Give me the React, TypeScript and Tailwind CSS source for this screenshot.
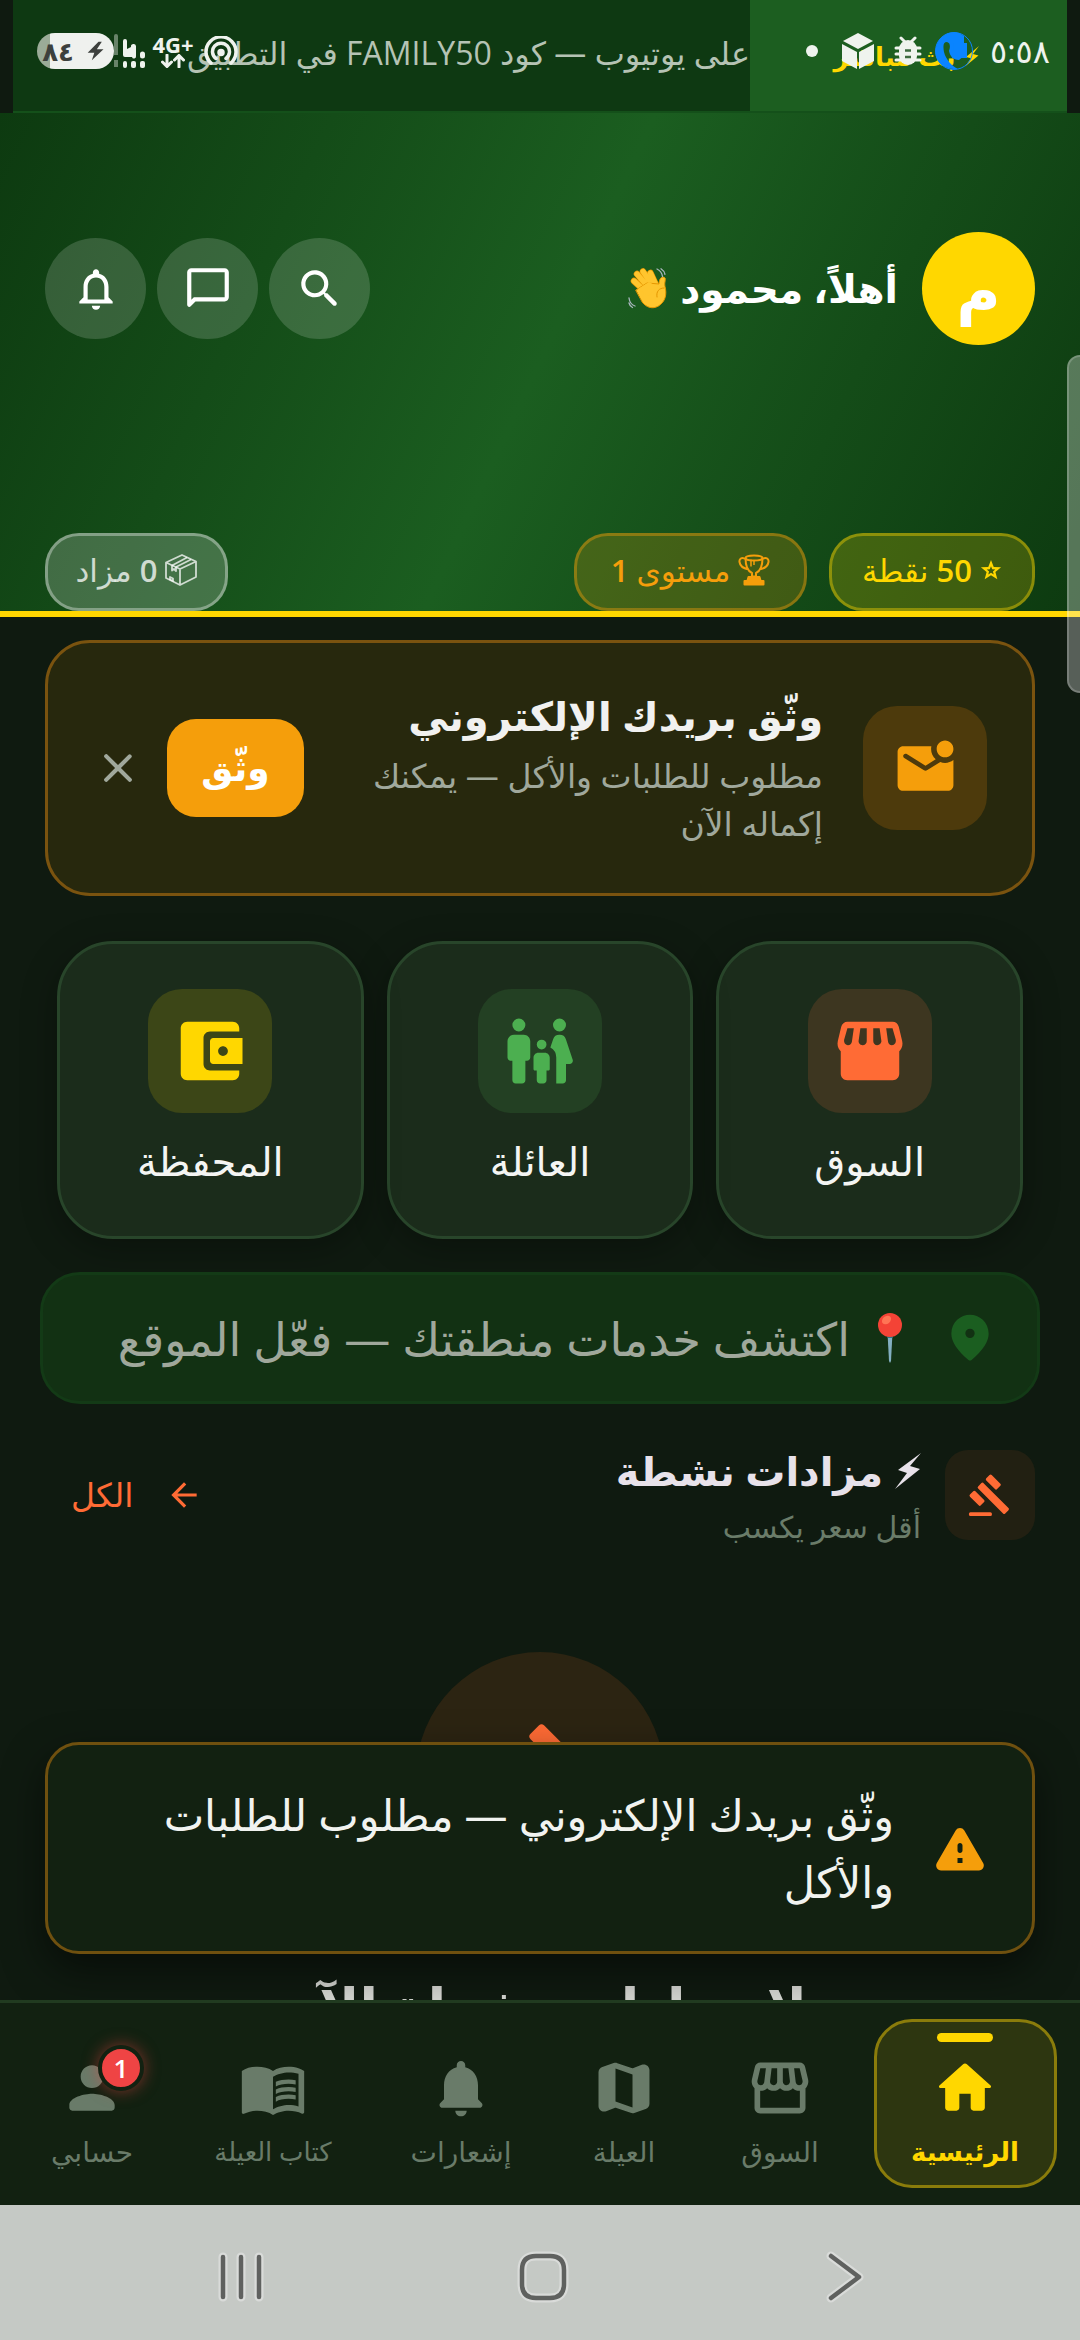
import { ReactNode } from "react";
import { MdArrowBack, MdMenuBook } from "react-icons/md";

type IconProps = { d: string; className?: string };

const Icon = ({ d, className }: IconProps) => (
  <svg viewBox="0 0 24 24" fill="currentColor" aria-hidden="true" className={className}>
    <path fillRule="evenodd" d={d} />
  </svg>
);

const paths = {
  home: "M10 19v-5h4v5c0 .55.45 1 1 1h3c.55 0 1-.45 1-1v-7h1.7c.46 0 .68-.57.33-.87L12.67 3.6c-.38-.34-.96-.34-1.34 0l-8.36 7.53c-.34.3-.13.87.33.87H5v7c0 .55.45 1 1 1h3c.55 0 1-.45 1-1z",
  storeOutline:
    "M21.9 8.89l-1.05-4.37c-.22-.9-1-1.52-1.91-1.52H5.05c-.9 0-1.69.63-1.9 1.52L2.1 8.89c-.24 1.02-.02 2.06.62 2.88.08.11.19.19.28.29V19c0 1.1.9 2 2 2h14c1.1 0 2-.9 2-2v-6.94c.09-.09.2-.18.28-.28.64-.82.87-1.87.62-2.89zM13 5h1.96l.54 4.52c.05.39-.07.78-.33 1.07-.22.26-.54.41-.95.41-.67 0-1.22-.59-1.22-1.31V5zM8.49 9.52L9.04 5H11v4.69c0 .72-.55 1.31-1.29 1.31-.34 0-.65-.15-.89-.41-.25-.29-.37-.68-.33-1.07zM4.04 9.36L5.05 5h1.97l-.58 4.86c-.08.65-.6 1.14-1.21 1.14-.49 0-.8-.27-.93-.44-.27-.32-.36-.75-.26-1.2zM5 19v-6.03c.08.01.15.03.23.03.87 0 1.66-.36 2.24-.95.6.6 1.4.95 2.31.95.87 0 1.65-.36 2.23-.93.59.57 1.39.93 2.29.93.84 0 1.64-.35 2.24-.95.58.59 1.37.95 2.24.95.08 0 .15-.02.23-.03V19H5zM16.98 5h1.95l1.01 4.36c.1.45.01.88-.26 1.2-.14.17-.44.44-.93.44-.61 0-1.14-.49-1.21-1.14L16.98 5z",
  store:
    "M21.9 8.89l-1.05-4.37c-.22-.9-1-1.52-1.91-1.52H5.05c-.9 0-1.69.63-1.9 1.52L2.1 8.89c-.24 1.02-.02 2.06.62 2.88.08.11.19.19.28.29V19c0 1.1.9 2 2 2h14c1.1 0 2-.9 2-2v-6.94c.09-.09.2-.18.28-.28.64-.82.87-1.87.62-2.89zM13 5h1.96l.54 3.9c.05.5-.5 1.3-1.28 1.3-.67 0-1.22-.59-1.22-1.31V5zM8.49 8.9L9.04 5H11v3.89c0 .72-.55 1.31-1.29 1.31-.74 0-1.27-.7-1.22-1.3zM4.04 8.56L5.05 5h1.97l-.58 4.06c-.08.65-.6 1.14-1.21 1.14-.9 0-1.29-.84-1.19-1.64zM16.98 5h1.95l1.01 3.56c.1.85-.29 1.64-1.19 1.64-.61 0-1.14-.49-1.21-1.14L16.98 5z",
  map: "M14.65 4.98l-5-1.75c-.42-.15-.88-.15-1.3-.01L4.36 4.56C3.55 4.84 3 5.6 3 6.46v11.85c0 1.41 1.41 2.37 2.72 1.86l2.93-1.14c.22-.09.47-.09.69-.01l5 1.75c.42.15.88.15 1.3.01l3.99-1.34c.81-.27 1.36-1.04 1.36-1.9V5.69c0-1.41-1.41-2.37-2.72-1.86l-2.93 1.14c-.22.08-.46.09-.69.01zM15 18.89l-6-2.11V5.11l6 2.11v11.67z",
  bell: "M12 22c1.1 0 2-.9 2-2h-4c0 1.1.89 2 2 2zm6-6v-5c0-3.07-1.64-5.64-4.5-6.32V4c0-.83-.67-1.5-1.5-1.5s-1.5.67-1.5 1.5v.68C7.63 5.36 6 7.92 6 11v5l-1.29 1.29c-.63.63-.19 1.71.7 1.71h13.17c.89 0 1.34-1.08.71-1.71L18 16z",
  bellOutline:
    "M12 22c1.1 0 2-.9 2-2h-4c0 1.1.9 2 2 2zm6-6v-5c0-3.07-1.63-5.64-4.5-6.32V4c0-.83-.67-1.5-1.5-1.5s-1.5.67-1.5 1.5v.68C7.64 5.36 6 7.92 6 11v5l-2 2v1h16v-1l-2-2zm-2 1H8v-6c0-2.48 1.51-4.5 4-4.5s4 2.02 4 4.5v6z",
  chat: "M20 2H4c-1.1 0-2 .9-2 2v15.6c0 .9 1.08 1.34 1.7.7L6 18h14c1.1 0 2-.9 2-2V4c0-1.1-.9-2-2-2zm0 14H5.2L4 17.2V4h16v12z",
  search:
    "M15.5 14h-.79l-.28-.27c1.2-1.4 1.82-3.31 1.48-5.34-.47-2.78-2.79-5-5.59-5.34-4.23-.52-7.79 3.04-7.27 7.27.34 2.8 2.56 5.12 5.34 5.59 2.03.34 3.94-.28 5.34-1.48l.27.28v.79l4.25 4.25c.41.41 1.08.41 1.49 0 .41-.41.41-1.08 0-1.49L15.5 14zm-6 0C7.01 14 5 11.99 5 9.5S7.01 5 9.5 5 14 7.01 14 9.5 11.99 14 9.5 14z",
  person:
    "M12 12c2.21 0 4-1.79 4-4s-1.79-4-4-4-4 1.79-4 4 1.79 4 4 4zm0 2c-2.67 0-8 1.34-8 4v1c0 .55.45 1 1 1h14c.55 0 1-.45 1-1v-1c0-2.66-5.33-4-8-4z",
  wallet:
    "M10 16V8c0-1.1.89-2 2-2h9V5c0-1.1-.9-2-2-2H5c-1.11 0-2 .9-2 2v14c0 1.1.89 2 2 2h14c1.1 0 2-.9 2-2v-1h-9c-1.11 0-2-.9-2-2zm3-8c-.55 0-1 .45-1 1v6c0 .55.45 1 1 1h9V8h-9zm3 5.5c-.83 0-1.5-.67-1.5-1.5s.67-1.5 1.5-1.5 1.5.67 1.5 1.5-.67 1.5-1.5 1.5z",
  family:
    "M16 4a2 2 0 1 1 4 0 2 2 0 0 1-4 0zM20 21v-5h1.11c.68 0 1.16-.67.95-1.32l-2.1-6.31A2 2 0 0 0 18.06 7h-.12a2 2 0 0 0-1.9 1.37l-.86 2.58A3.5 3.5 0 0 1 17 14v8h2c.55 0 1-.45 1-1zM12.5 11.5a1.5 1.5 0 1 0 0-3 1.5 1.5 0 0 0 0 3zM5.5 6a2 2 0 1 0 0-4 2 2 0 0 0 0 4zM7.5 21v-6H8c.55 0 1-.45 1-1V9c0-1.1-.9-2-2-2H4c-1.1 0-2 .9-2 2v5c0 .55.45 1 1 1h.5v6c0 .55.45 1 1 1h2c.55 0 1-.45 1-1zM14 21v-3h.5c.28 0 .5-.22.5-.5V14c0-.82-.68-1.5-1.5-1.5h-2c-.82 0-1.5.68-1.5 1.5v3.5c0 .28.22.5.5.5h.5v3c0 .55.45 1 1 1h1c.55 0 1-.45 1-1z",
  mail: "M19 10c1.13 0 2.16-.39 3-1.02V18c0 1.1-.9 2-2 2H4c-1.1 0-2-.9-2-2V6c0-1.1.9-2 2-2h10.1c-.06.32-.1.66-.1 1 0 1.48.65 2.79 1.67 3.71L12 11 5.3 6.81c-.57-.35-1.3.05-1.3.72 0 .29.15.56.4.72l7.07 4.42c.32.2.74.2 1.06 0l4.77-2.98c.54.19 1.1.31 1.7.31zm-3-5c0 1.66 1.34 3 3 3s3-1.34 3-3-1.34-3-3-3-3 1.34-3 3z",
  pin: "M12 2C8 2 4 5.05 4 10.2c0 3.3 2.5 7.2 7.34 11.2.38.33.95.33 1.33 0C17.5 17.4 20 13.5 20 10.2 20 5.05 16 2 12 2zm0 10a2 2 0 1 1 0-4 2 2 0 0 1 0 4z",
  warning:
    "M4.47 21h15.06c1.54 0 2.5-1.67 1.73-3L13.73 4.99c-.77-1.33-2.69-1.33-3.46 0L2.74 18c-.77 1.33.19 3 1.73 3zM12 14c-.55 0-1-.45-1-1v-2c0-.55.45-1 1-1s1 .45 1 1v2c0 .55-.45 1-1 1zm1 4h-2v-2h2v2z",
  bolt: "M19 2L6 13l5 1.2L5 22.5 18.5 11.6 13 10z",
  star: "M12 1l3 7.6 8 .5-6.2 5.1 2.1 7.9L12 17.7 5.1 22.1l2.1-7.9L1 9.1l8-.5zM12 8l-1.3 3.2-3.4.3 2.6 2.2-.9 3.3 3-1.9 3 1.9-.9-3.3 2.6-2.2-3.4-.3z",
  close: "M18.3 5.7a1 1 0 0 0-1.41 0L12 10.59 7.11 5.7A1 1 0 1 0 5.7 7.11L10.59 12 5.7 16.89a1 1 0 1 0 1.41 1.41L12 13.41l4.89 4.89a1 1 0 1 0 1.41-1.41L13.41 12l4.89-4.89a1 1 0 0 0 0-1.41z",
};

const GavelIcon = ({ className }: { className?: string }) => (
  <svg viewBox="0 0 24 24" fill="currentColor" stroke="currentColor" strokeWidth="1.6" strokeLinejoin="round" aria-hidden="true" className={className}>
    <path d="M1.8 21.8h10.4v.4H1.8zM6.375 8.07l1.7-1.7 13 13.015-1.7 1.7zM12.317 2.13l4.53 4.526-1.7 1.7-4.53-4.53zM3.825 10.615l4.53 4.527-1.7 1.7-4.53-4.527z" />
  </svg>
);

const TrophyIcon = ({ className }: { className?: string }) => (
  <svg viewBox="0 0 32 32" fill="none" stroke="currentColor" strokeWidth="2" strokeLinejoin="round" aria-hidden="true" className={className}>
    <ellipse cx="16" cy="4" rx="8.5" ry="2.6" />
    <path d="M7.5 4c0 8 2 13 6.5 15v3.5h4V19c4.5-2 6.500-7 6.500-15M8 5.500C4 2.500 1 4.500 1.500 8c.5 4 4.500 6.500 9 7.500M24 5.500c4-3 7-1 6.500 2.500-.5 4-4.500 6.500-9 7.500" />
    <path d="M10.500 23h11l1 3.500h-13zM6.500 27h19v3.500h-19z" fill="currentColor" />
    <path d="M13 5.500v7M16 6v5" strokeWidth="1.5" />
  </svg>
);

const PackageIcon = ({ className }: { className?: string }) => (
  <svg viewBox="0 0 32 32" fill="none" stroke="currentColor" strokeWidth="1.8" strokeLinejoin="round" aria-hidden="true" className={className}>
    <path d="M1 8.500L17 1l14 6.500V23l-16 8L1 24zM1 8.500L15 15l16-7.500M15 15v16" />
    <path d="M7 11.500L22 3.500M11 13l15-7.500M7 11.500v5l2 -1.500 2 2V13M5 23v2.500l3 1.500v-2.500z" />
  </svg>
);

const WaveEmoji = ({ className }: { className?: string }) => (
  <svg viewBox="0 0 40 42" fill="none" strokeLinecap="round" aria-hidden="true" className={className}>
    <g stroke="#e59600" strokeWidth="6.5">
      <path d="M18 24L6 13M21 20L9 6M25 18L15 3.500M29 19L22.500 5" />
    </g>
    <g stroke="#ffc52e" strokeWidth="5.3">
      <path d="M18 24L6 13M21 20L9 6M25 18L15 3.500M29 19L22.500 5" />
    </g>
    <path d="M8 22l11-7 12 1c0-5 2.500-8 5.500-6.500 2 1-.5 5 .5 9 2 8 .5 15-6.500 19.500-6 3.500-12 1.500-16-3.500z" fill="#ffc52e" stroke="#e59600" strokeWidth="1" />
    <path d="M10 21l11-7 9 5-10 9z" fill="#ffc52e" />
    <path d="M36 20c-5 0-8 3.500-7 9" stroke="#e59600" />
    <path d="M1 30c.5 4 3 7 6 8M1 35c.5 2 1.500 3.500 3.500 4.500M29 1c3 1.500 5 4 5.500 7.500M33 .8c2 1.300 3.500 3 4 5.500" stroke="#a9b6bd" strokeWidth="1.3" />
  </svg>
);

const PinEmoji = ({ className }: { className?: string }) => (
  <svg viewBox="0 0 24 50" aria-hidden="true" className={className}>
    <path d="M9.500 20h5l-1.500 28-1 2-1-2z" fill="#82aec0" />
    <path d="M9.500 22h5v3h-5z" fill="#2f7889" />
    <circle cx="12" cy="12" r="12" fill="#f44336" />
    <ellipse cx="8.5" cy="7" rx="5" ry="3.8" transform="rotate(-40 8.5 7)" fill="#ff7555" />
  </svg>
);

/* phone status bar, floats above the ticker */
const StatusBar = () => (
  <div dir="ltr" className="pointer-events-none absolute inset-x-0 top-0 z-20 flex h-[102px] items-center justify-between pr-[30px] pl-[37px] text-[#eff3ee]">
    <div className="flex items-center">
      <div className="flex h-9 w-[77px] items-center justify-end gap-3 rounded-full bg-linear-to-r from-[#9bab98] from-17% to-[#eff1ee] to-17% pr-2 text-[#3d403d]">
        <span className="text-[26px] leading-none font-bold">٨٤</span>
        <Icon d="M15 1L2 14h8l-3 9 14-13h-8l6-9z" className="size-5" />
      </div>
      <svg viewBox="0 0 32 36" fill="currentColor" aria-hidden="true" className="h-9 w-8">
        <path d="M0 3a2 2 0 0 1 4 0v19H0zM0 27h4v7H0z" opacity=".4" />
        <path d="M9 8a2 2 0 0 1 4 0v8l4-2a2 2 0 0 1 5-1v10a2 2 0 0 1-4 1h-7a2 2 0 0 1-2-2zM26 21a2 2 0 0 1 5 0v2a2 2 0 0 1-5 0z" />
        <rect x="9" y="28" width="4" height="7" rx="2" />
        <rect x="17" y="28" width="5" height="7" rx="2" />
        <rect x="26" y="28" width="5" height="7" rx="2" />
      </svg>
      <div className="ml-1 flex w-[46px] flex-col items-center">
        <span className="font-['Open_Sans'] text-[22px] leading-5 font-bold">4G+</span>
        <svg viewBox="0 0 24 14" fill="none" stroke="currentColor" strokeWidth="3" strokeLinecap="round" aria-hidden="true" className="h-3.5 w-6">
          <path d="M6 1v11M1.500 8L6 12.500 10.500 8M18 13V2M13.500 6L18 1.500 22.500 6" />
        </svg>
      </div>
      <svg viewBox="0 0 34 30" fill="none" stroke="currentColor" strokeWidth="3.5" strokeLinecap="round" aria-hidden="true" className="ml-2 h-[30px] w-[34px]">
        <path d="M7 27a15 15 0 1 1 20 0M12 22.500a8.500 8.500 0 1 1 10 0" />
        <circle cx="17" cy="16.5" r="2" fill="currentColor" />
      </svg>
    </div>
    <div className="flex items-center">
      <span className="mr-6 size-3 rounded-full bg-current" />
      <svg viewBox="0 0 32 36" fill="currentColor" aria-hidden="true" className="mr-5 h-9 w-8">
        <path d="M16 0l15 8-15 8L1 8zM0 11l15 8v17L0 28zM32 11l-15 8v17l15-8z" />
      </svg>
      <svg viewBox="0 0 28 30" aria-hidden="true" className="mr-3 h-[30px] w-7">
        <path d="M7 2l4 4M21 2l-4 4M2 12h24M2 18h24M2 24h24" stroke="currentColor" strokeWidth="3" strokeLinecap="round" />
        <rect x="5" y="4" width="18" height="25" rx="9" fill="currentColor" />
        <path d="M11 14.500h6M11 21h6" stroke="#3d6b3f" strokeWidth="2.5" />
      </svg>
      <svg viewBox="0 0 40 40" aria-hidden="true" className="mr-4 size-10">
        <circle cx="20" cy="20" r="18.5" fill="none" stroke="#0a84ff" />
        <path d="M25 2C14-1 2 7 1.500 20S13 39 24 38c-6-3-12-9-14-17-1-6-1-10 3-10 4 1 3 6 2 9 1 5 4 9 10 9l5-4V5z" fill="#0a84ff" />
        <path d="M20 12h13v15H18z" fill="#0a84ff" />
      </svg>
      <span className="w-[60px] text-center text-[32px] leading-none">٥:٥٨</span>
    </div>
  </div>
);

const Ticker = () => (
  <div className="mx-[13px] flex h-[113px] border-b-2 border-[#14501a] bg-[#0e3912] text-[32px] leading-[106px] whitespace-nowrap">
    <div className="flex w-[317px] shrink-0 items-center justify-center gap-1 bg-[#1c5e20] text-[26px] leading-[102px] font-bold text-[#ffd700]">
      <Icon d={paths.bolt} className="size-6" />
      بث مباشر
    </div>
    <p className="min-w-0 flex-1 overflow-hidden text-[#b5c3b4]">على يوتيوب — كود FAMILY50 في التطبيق</p>
  </div>
);

const headerButtons = [
  { label: "بحث", d: paths.search },
  { label: "الرسائل", d: paths.chat },
  { label: "الإشعارات", d: paths.bellOutline },
];

const Chip = ({ className, children }: { className: string; children: ReactNode }) => (
  <div className={`flex h-[78px] items-center justify-center gap-2 rounded-[34px] border-3 pb-1 text-[31px] whitespace-nowrap ${className}`}>
    {children}
  </div>
);

const Header = () => (
  <header className="border-b-6 border-[#ffd700] bg-linear-115 from-[#0d3a10] via-[#1b5e20] to-[#0d3a10] px-[45px] pt-[119px]">
    <div className="flex items-center gap-6">
      <div className="flex size-[113px] items-center justify-center rounded-full bg-[#ffd700] text-[60px] font-bold text-white">م</div>
      <h1 className="flex flex-1 items-center gap-3 text-[39px] font-bold text-white">
        أهلاً، محمود
        <WaveEmoji className="h-[42px] w-10" />
      </h1>
      <div className="flex gap-[11px]">
        {headerButtons.map(({ label, d }) => (
          <button key={label} aria-label={label} className="flex size-[101px] items-center justify-center rounded-full bg-white/16 text-white">
            <Icon d={d} className="size-[50px]" />
          </button>
        ))}
      </div>
    </div>
    <div className="mt-[188px] flex gap-[22px]">
      <Chip className="w-[206px] border-[#ffd700]/40 bg-[#ffd700]/20 text-[#ffd700]">
        <Icon d={paths.star} className="size-[22px]" />
        <span><b className="font-semibold">50</b> نقطة</span>
      </Chip>
      <Chip className="w-[233px] border-[#f59e0b]/40 bg-[#f59e0b]/20 text-[#f59e0b]">
        <TrophyIcon className="size-8" />
        <span>مستوى <b className="font-semibold">1</b></span>
      </Chip>
      <Chip className="mr-auto w-[183px] border-white/35 bg-white/20 text-white/75">
        <PackageIcon className="size-8" />
        <span><b className="font-semibold">0</b> مزاد</span>
      </Chip>
    </div>
  </header>
);

const EmailCard = () => (
  <section className="mx-[45px] flex items-center rounded-[45px] border-3 border-[#7a530f] bg-[#27280d] p-[45px]">
    <div className="flex size-[124px] shrink-0 items-center justify-center rounded-[34px] bg-[#4d3a0c] text-[#f59e0b]">
      <Icon d={paths.mail} className="size-[67px]" />
    </div>
    <div className="mr-10 flex-1">
      <h2 className="mb-2 text-[40px] leading-14 font-bold whitespace-nowrap text-[#f1f1f0]">وثّق بريدك الإلكتروني</h2>
      <p className="w-[477px] text-[33px] leading-12 text-[#a0a89c]">مطلوب للطلبات والأكل — يمكنك إكماله الآن</p>
    </div>
    <button className="h-[98px] w-[137px] rounded-[29px] bg-[#f59e0b] text-[36px] font-bold text-white">وثّق</button>
    <button aria-label="إغلاق" className="mr-6 text-[#a0a89c]">
      <Icon d={paths.close} className="size-[50px]" />
    </button>
  </section>
);

const tiles = [
  { label: "السوق", d: paths.store, color: "bg-[#3d3620] text-[#ff6b35]" },
  { label: "العائلة", d: paths.family, color: "bg-[#234023] text-[#4caf50]" },
  { label: "المحفظة", d: paths.wallet, color: "bg-[#3c4617] text-[#ffd700]" },
];

const Tiles = () => (
  <div className="mx-[57px] mt-[45px] grid grid-cols-3 gap-[23px]">
    {tiles.map(({ label, d, color }) => (
      <button key={label} className="flex flex-col items-center gap-[18px] rounded-[56px] border-3 border-[#28452a] bg-[#1b2c1b] py-[45px] shadow-[0_10px_36px_rgba(0,0,0,0.3)]">
        <span className={`flex size-[124px] items-center justify-center rounded-[34px] ${color}`}>
          <Icon d={d} className="size-[78px]" />
        </span>
        <span className="text-[40px] leading-[60px] text-[#f4f5f3]">{label}</span>
      </button>
    ))}
  </div>
);

const LocationBanner = () => (
  <button className="relative mx-10 mt-[33px] flex h-[132px] shrink-0 items-center rounded-[40px] border-3 border-[#133a16] bg-[#123113] px-[39px] text-[46px] whitespace-nowrap text-[#a0a89c]">
    <Icon d={paths.pin} className="size-[56px] text-[#1b5e20]" />
    <PinEmoji className="mr-10 h-[50px] w-6" />
    <span className="mr-7">اكتشف خدمات منطقتك — فعّل الموقع</span>
  </button>
);

const Auctions = () => (
  <section>
    <div className="mx-[45px] mt-[33px] flex h-[116px] items-center">
      <div className="flex size-[90px] items-center justify-center rounded-[23px] bg-[#222012] text-[#ff6b35]">
        <GavelIcon className="size-[46px]" />
      </div>
      <div className="mr-6 flex-1">
        <h2 className="flex items-center gap-3 text-[40px] leading-16 font-bold text-[#e8e2ea]">
          <svg viewBox="0 0 26 36" fill="currentColor" aria-hidden="true" className="h-9 w-[26px]">
            <path d="M26 0L3 17l9 3-12 16 25-20-10-3z" />
          </svg>
          مزادات نشطة
        </h2>
        <p className="text-[30px] leading-12 text-[#6a7c69]">أقل سعر يكسب</p>
      </div>
      <a href="#all" className="ml-[26px] flex items-center gap-8 text-[33px] text-[#ff6b35]">
        <MdArrowBack className="size-[38px]" />
        الكل
      </a>
    </div>
    <div className="mt-[99px] flex flex-col items-center">
      <div className="flex size-[248px] items-center justify-center rounded-full bg-[#2c2412] text-[#ff6b35]">
        <GavelIcon className="size-[116px]" />
      </div>
      <h3 className="mt-[66px] text-[54px] leading-20 font-bold whitespace-nowrap text-[#d5d7d2]">لا مزادات نشطة الآن</h3>
    </div>
  </section>
);

const Toast = () => (
  <div role="alert" className="absolute inset-x-[45px] bottom-[46px] flex items-center rounded-[34px] border-3 border-[#6f500f] bg-[#122111] py-9 pr-[42px] pl-[90px] shadow-[0_16px_40px_rgba(0,0,0,0.5)]">
    <Icon d={paths.warning} className="size-[60px] shrink-0 text-[#f59e0b]" />
    <p className="mr-9 text-[43px] leading-[67px] text-[#f1f3f0]">وثّق بريدك الإلكتروني — مطلوب للطلبات والأكل</p>
  </div>
);

const navItems = [
  { label: "السوق", icon: <Icon d={paths.storeOutline} className="size-[68px]" /> },
  { label: "العيلة", icon: <Icon d={paths.map} className="size-[68px]" /> },
  { label: "إشعارات", icon: <Icon d={paths.bell} className="size-[68px]" /> },
  { label: "كتاب العيلة", icon: <MdMenuBook className="size-[68px]" />, small: true },
  { label: "حسابي", icon: <Icon d={paths.person} className="size-[68px]" />, badge: 1 },
];

const BottomNav = () => (
  <nav className="grid h-[205px] shrink-0 grid-cols-[230fr_140fr_172fr_154fr_222fr_140fr] border-t-3 border-[#213b20] bg-[#122111] pt-4 pl-[22px] text-[26px] whitespace-nowrap text-[#697b69]">
    <a href="#home" className="mx-auto flex h-[169px] w-[183px] flex-col items-center rounded-[38px] border-3 border-[#8a7c0b] bg-[#2d3610] pt-[11px] font-bold text-[#ffd700]">
      <span className="h-[9px] w-14 rounded-full bg-current" />
      <Icon d={paths.home} className="mt-3 size-[68px]" />
      <span className="leading-[58px]">الرئيسية</span>
    </a>
    {navItems.map(({ label, icon, badge, small }) => (
      <a key={label} href={`#${label}`} className="flex flex-col items-center pt-[35px]">
        <span className="relative">
          {icon}
          {badge && (
            <span className="absolute -top-[9px] left-[40px] flex size-[46px] items-center justify-center rounded-full border-4 border-[#122111] bg-[#ef4444] text-[26px] font-semibold text-white shadow-[0_0_16px_rgba(239,68,68,0.5)]">
              {badge}
            </span>
          )}
        </span>
        <span className={`leading-[58px] ${small ? "text-[26px]" : "text-[28px]"}`}>{label}</span>
      </a>
    ))}
  </nav>
);

const systemIcons = [
  { label: "recents", d: "M6 4v40M24 4v40M42 4v40" },
  { label: "home", d: "M17 3h14q14 0 14 14v14q0 14-14 14H17Q3 45 3 31V17Q3 3 17 3z" },
  { label: "back", d: "M10 3l28 21L10 45" },
];

const SystemNav = () => (
  <div dir="ltr" className="flex h-[135px] shrink-0 items-center justify-between bg-[#c5c9c5] pt-2 pr-[207px] pl-[213px]">
    {systemIcons.map(({ label, d }) => (
      <button key={label} aria-label={label}>
        <svg viewBox="-4 -4 56 56" fill="none" strokeLinecap="round" strokeLinejoin="round" className="size-14">
          <path d={d} stroke="#d9dbd9" strokeWidth="9" />
          <path d={d} stroke="#5f615f" strokeWidth="4.5" />
        </svg>
      </button>
    ))}
  </div>
);

export default function App() {
  return (
    <div dir="rtl" className="relative flex h-screen flex-col overflow-hidden bg-[#0f1a10] font-['Open_Sans','DejaVu_Sans',sans-serif]">
      <StatusBar />
      <Ticker />
      <Header />
      <main className="relative flex min-h-0 flex-1 flex-col overflow-hidden pt-[23px]">
        <EmailCard />
        <Tiles />
        <LocationBanner />
        <Auctions />
        <Toast />
      </main>
      <BottomNav />
      <SystemNav />
      {/* scroll thumb */}
      <div className="absolute top-[355px] right-0 h-[338px] w-[13px] rounded-l-[13px] border-y-2 border-l-2 border-white/20 bg-white/30" />
    </div>
  );
}
